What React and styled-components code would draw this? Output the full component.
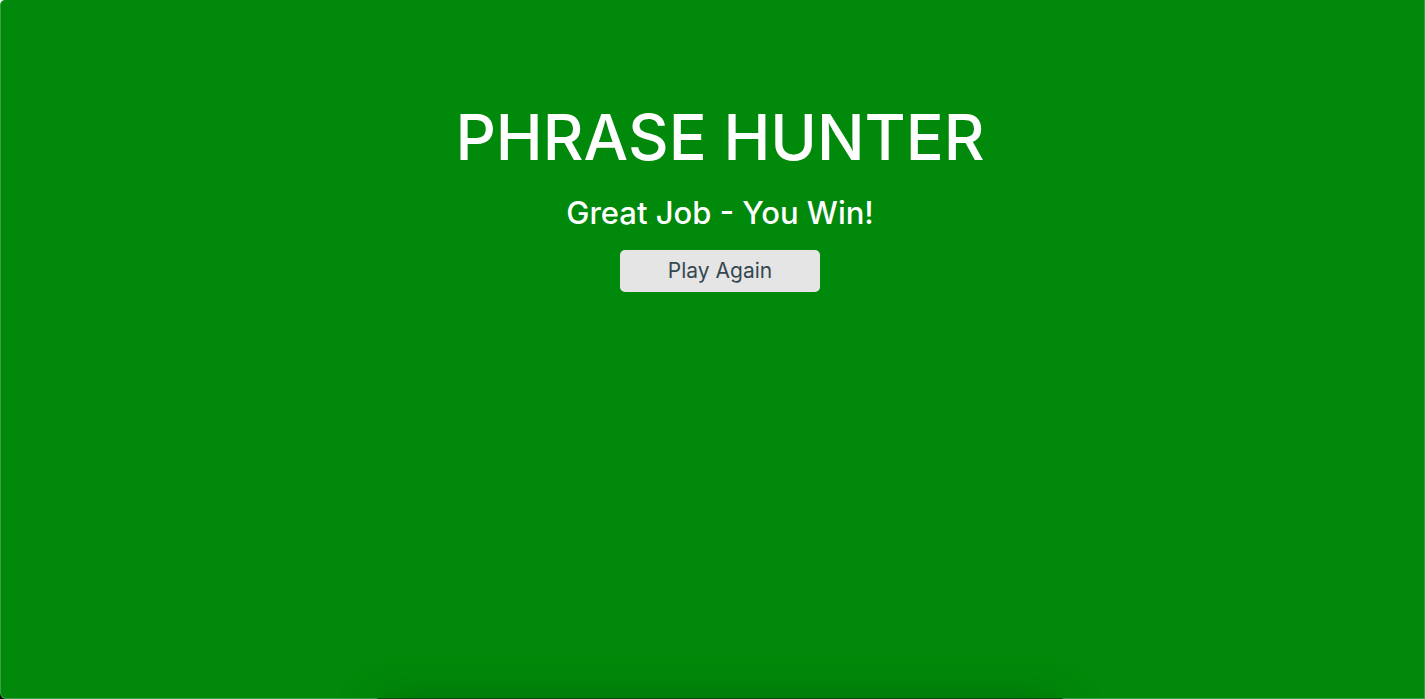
import React from "react";
import styled, { createGlobalStyle } from "styled-components";

const GlobalStyle = createGlobalStyle`
  *, *::before, *::after { box-sizing: border-box; }
  body {
    margin: 0;
    background: linear-gradient(#fff 50%, #000 50%);
    font-family: Inter, "Open Sans", sans-serif;
  }
`;

const Overlay = styled.main`
  position: relative;
  display: flex;
  flex-direction: column;
  align-items: center;
  min-height: 100vh;
  padding: 100px 0 0 15px;
  overflow: hidden;
  color: #fff;
  background: #00890a;
  border: 1px solid #35a23d;
  border-top: 0;
  border-radius: 5px 0 0 6px;
`;

const Title = styled.h1`
  margin: 0;
  font-size: 63px;
  font-weight: 500;
  line-height: 74px;
`;

const Message = styled.h2`
  margin: 20px 0 18px;
  font-size: 31px;
  font-weight: 500;
  line-height: 38px;
`;

const PlayButton = styled.button`
  width: 200px;
  height: 42px;
  padding: 0;
  border: 0;
  border-radius: 5px;
  background: #e5e5e5;
  color: #37474f;
  font: 400 21px/42px Inter, "Open Sans", sans-serif;
  cursor: pointer;
`;

const DockEdge = styled.div`
  position: absolute;
  top: calc(100% - 1px);
  left: calc(50% + 7px);
  width: 688px;
  height: 60px;
  transform: translateX(-50%);
  border-radius: 3px;
  background: #064d0b;
  box-shadow: 0 0 45px rgba(0, 0, 0, 0.17);
`;

const Frame = styled.div`
  position: relative;
  overflow: hidden;
`;

export default function App() {
  return (
    <>
      <GlobalStyle />
      <Frame>
        <Overlay>
          <Title>PHRASE HUNTER</Title>
          <Message>Great Job - You Win!</Message>
          <PlayButton type="button">Play Again</PlayButton>
        </Overlay>
        <DockEdge />
      </Frame>
    </>
  );
}
